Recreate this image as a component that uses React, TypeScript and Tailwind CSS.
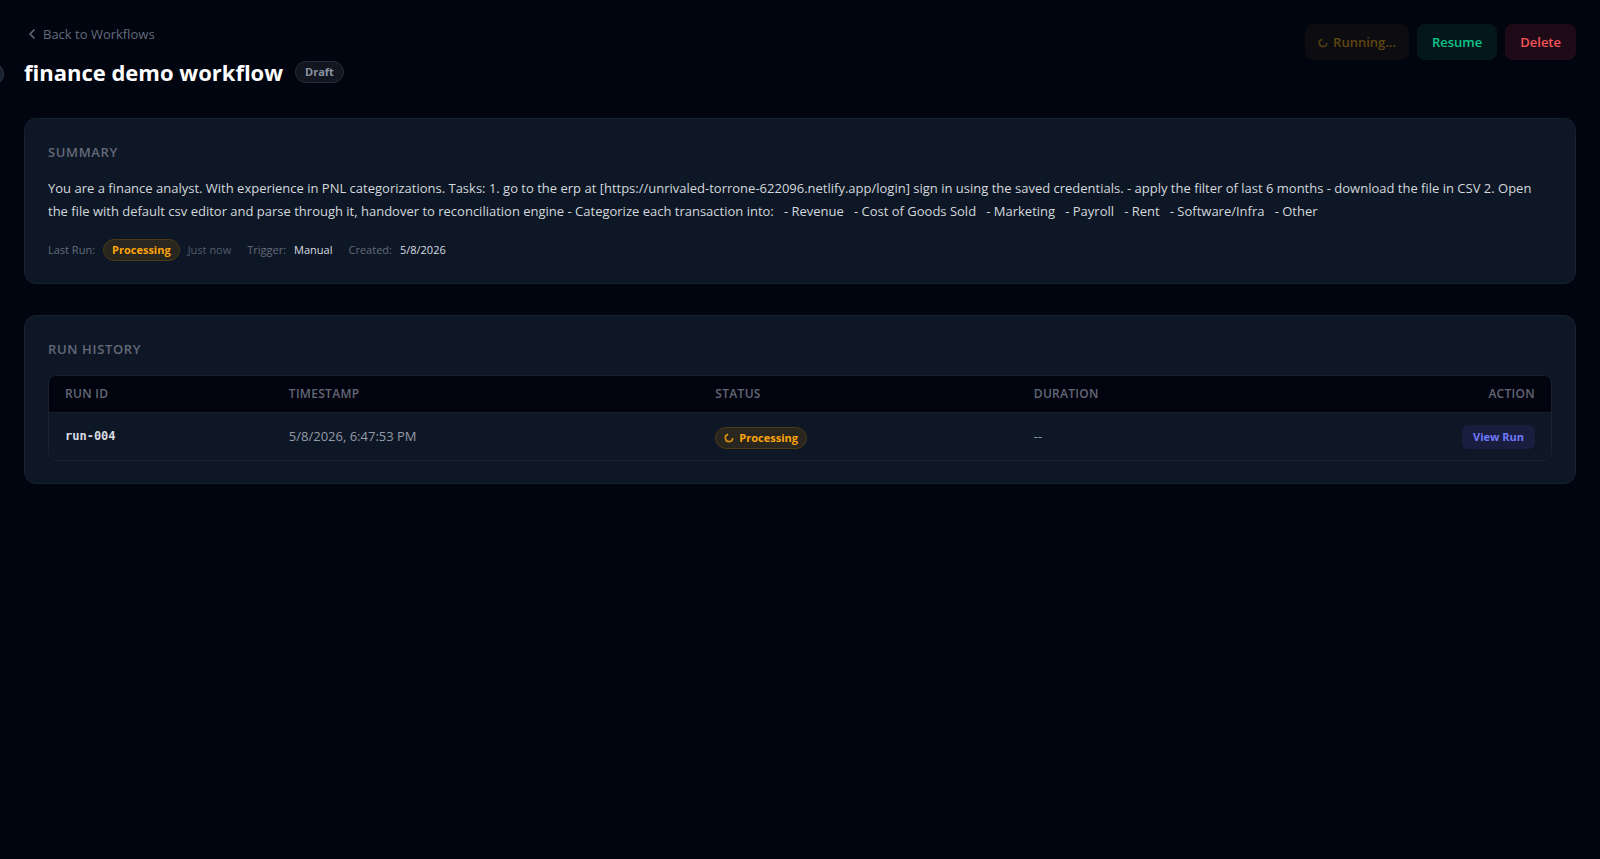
import { ChevronLeft } from "lucide-react";
import type { ReactNode } from "react";

type Run = {
  id: string;
  timestamp: string;
  status: string;
  duration: string;
};

const runs: Run[] = [
  { id: "run-004", timestamp: "5/8/2026, 6:47:53 PM", status: "Processing", duration: "--" },
];

const summary =
  "You are a finance analyst. With experience in PNL categorizations. Tasks: 1. go to the erp at [https://unrivaled-torrone-622096.netlify.app/login] sign in using the saved credentials. - apply the filter of last 6 months - download the file in CSV 2. Open the file with default csv editor and parse through it, handover to reconciliation engine - Categorize each transaction into:   - Revenue   - Cost of Goods Sold   - Marketing   - Payroll   - Rent   - Software/Infra   - Other";

function Spinner() {
  return (
    <svg width="10" height="10" viewBox="0 0 10 10" fill="none" className="shrink-0 opacity-80" aria-hidden="true">
      <path d="M4.2 1.3A3.7 3.7 0 1 0 8.7 5" stroke="currentColor" strokeWidth="1.7" />
    </svg>
  );
}

function StatusBadge({ label, spinning = false }: { label: string; spinning?: boolean }) {
  return (
    <span className="inline-flex h-[22px] items-center gap-[5px] rounded-full border border-[#4b3a14] bg-[#29261f] px-2 text-[11px] font-bold text-[#fda50b]">
      {spinning && <Spinner />}
      {label}
    </span>
  );
}

function Card({ title, children }: { title: string; children: ReactNode }) {
  return (
    <section className="rounded-xl border border-[#17212f] bg-[#0e1725] px-[23px] pt-[23px] pb-[22px]">
      <h2 className="text-[13px] leading-5 font-semibold tracking-wider text-[#64697a] uppercase">{title}</h2>
      {children}
    </section>
  );
}

function RunTable() {
  return (
    <div className="mt-4 overflow-hidden rounded-lg border border-[#18212f]">
      <table className="w-full table-fixed text-left">
        <thead className="bg-[#01040f] text-[12px] leading-4 tracking-wide text-[#646776] uppercase">
          <tr className="h-9 border-b border-[#18212f]">
            <th scope="col" className="w-[14.9%] px-4 font-semibold">Run ID</th>
            <th scope="col" className="w-[28.4%] px-4 font-semibold">Timestamp</th>
            <th scope="col" className="w-[21.2%] px-4 font-semibold">Status</th>
            <th scope="col" className="px-4 font-semibold">Duration</th>
            <th scope="col" className="px-4 text-right font-semibold">Action</th>
          </tr>
        </thead>
        <tbody className="text-[13px] leading-5 text-[#939aa8]">
          {runs.map((run) => (
            <tr key={run.id} className="h-12">
              <td className="px-4 font-['DejaVu_Sans_Mono',monospace] text-[12px] font-bold text-[#d8dce2]">{run.id}</td>
              <td className="px-4">{run.timestamp}</td>
              <td className="px-4 pt-1">
                <StatusBadge label={run.status} spinning />
              </td>
              <td className="px-4">{run.duration}</td>
              <td className="px-4 pt-0.5 text-right">
                <button type="button" className="h-6 rounded-md bg-[#191e3f] px-[11px] text-[11px] leading-6 font-bold text-[#7079f8]">
                  View Run
                </button>
              </td>
            </tr>
          ))}
        </tbody>
      </table>
    </div>
  );
}

export default function App() {
  return (
    <div className="relative min-h-screen overflow-hidden bg-[#010510] p-6 font-['Open_Sans','Noto_Sans',sans-serif]">
      {/* sidebar toggle, mostly hidden behind the left edge */}
      <button
        type="button"
        aria-label="Toggle sidebar"
        className="absolute top-[62px] -left-5 size-6 rounded-full border border-[#2c3442] bg-[#1a2230]"
      />

      <header className="flex items-start justify-between">
        <div>
          <a href="#workflows" className="flex items-center gap-[3px] text-[13px] leading-5 text-[#646b7b]">
            <ChevronLeft size={16} strokeWidth={2.5} />
            Back to Workflows
          </a>
          <div className="mt-3 flex items-center gap-3">
            <h1 className="text-[22px] leading-8 font-bold text-white">finance demo workflow</h1>
            <span className="flex h-[22px] items-center rounded-full border border-[#262d38] bg-[#111620] px-[9px] text-[11px] font-bold text-[#8d94a2]">
              Draft
            </span>
          </div>
        </div>
        <div className="flex gap-2 text-[13px] font-semibold">
          <button
            type="button"
            disabled
            className="flex h-9 items-center gap-[5px] rounded-lg bg-[#0c0c11] px-[13px] pt-0.5 text-[#604610]"
          >
            <Spinner />
            Running...
          </button>
          <button type="button" className="h-9 rounded-lg bg-[#03171d] px-[15px] pt-0.5 text-[#0bc588]">
            Resume
          </button>
          <button type="button" className="h-9 rounded-lg bg-[#1f0b17] px-[15px] pt-0.5 text-[#f7555a]">
            Delete
          </button>
        </div>
      </header>

      <main className="mt-[30px] flex flex-col gap-[31px]">
        <Card title="Summary">
          <p className="mt-[15px] text-[13px] leading-[23px] whitespace-pre-wrap text-[#d3d7de]">{summary}</p>
          <div className="mt-4 flex h-[22px] items-center gap-4 text-[11px] text-[#646b7b]">
            <div className="flex items-center gap-2">
              <span>Last Run:</span>
              <StatusBadge label="Processing" />
              <span className="text-[#535b6b]">Just now</span>
            </div>
            <div className="flex items-center gap-2">
              <span>Trigger:</span>
              <span className="font-medium text-[#d8dce2]">Manual</span>
            </div>
            <div className="flex items-center gap-2">
              <span>Created:</span>
              <span className="font-medium text-[#d8dce2]">5/8/2026</span>
            </div>
          </div>
        </Card>

        <Card title="Run History">
          <RunTable />
        </Card>
      </main>
    </div>
  );
}
